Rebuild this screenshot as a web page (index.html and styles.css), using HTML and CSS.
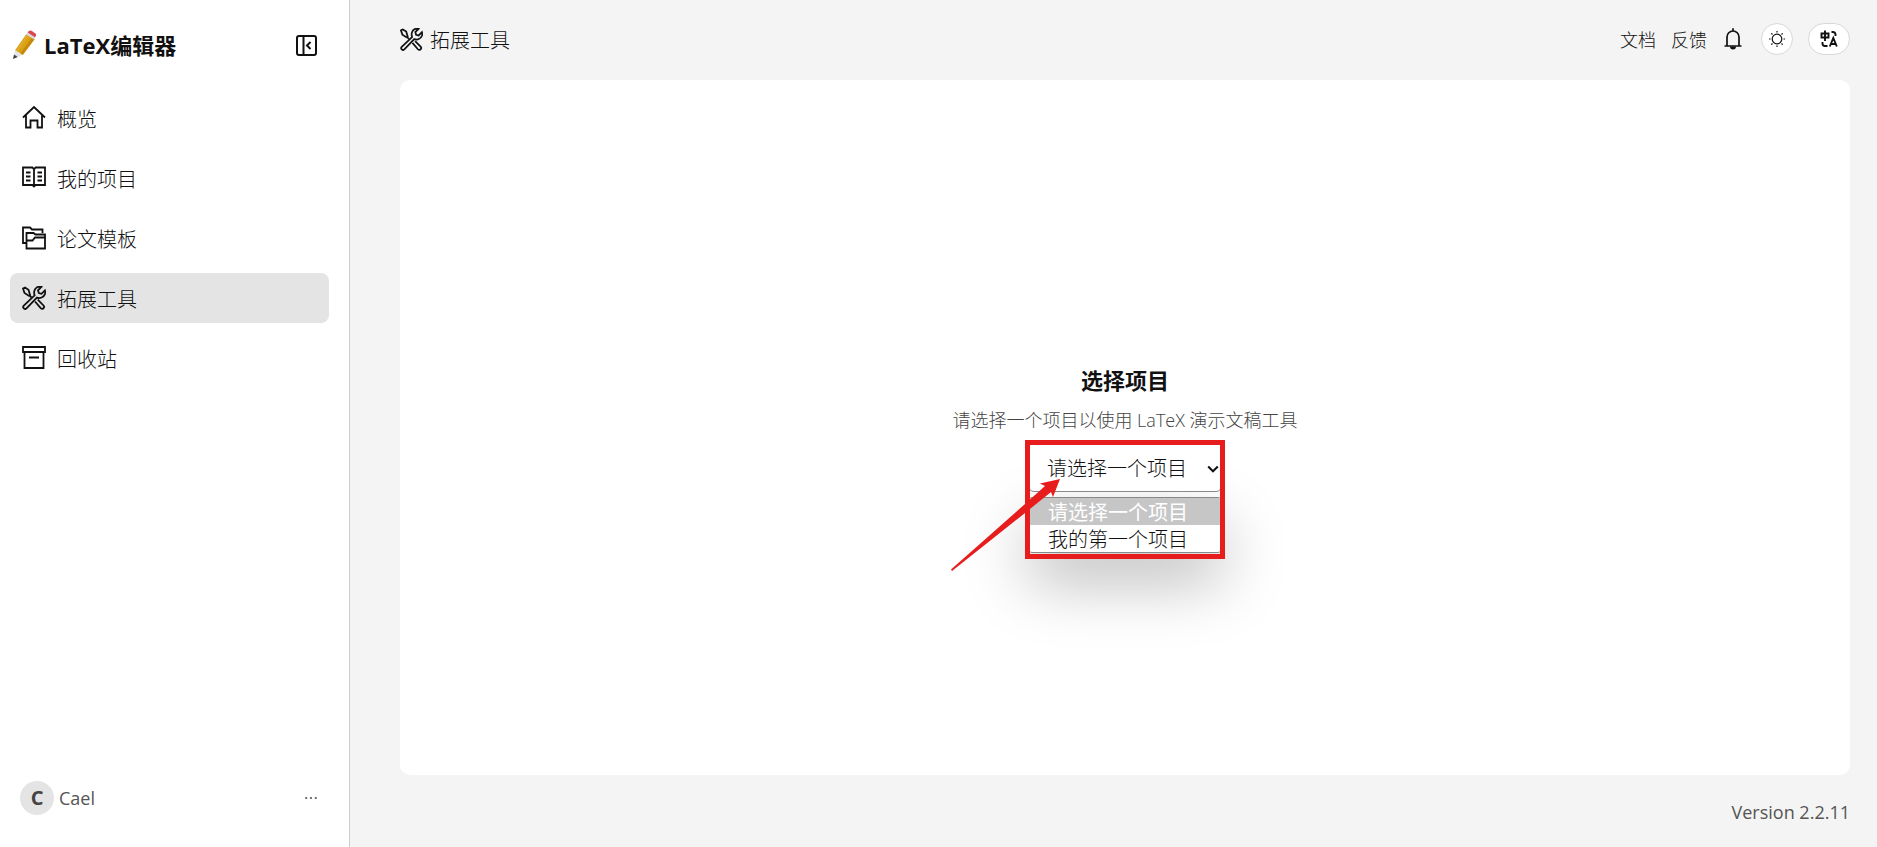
FILE: index.html
```html
<!DOCTYPE html>
<html lang="zh-CN">
<head>
<meta charset="utf-8">
<meta name="viewport" content="width=device-width, initial-scale=1">
<title>LaTeX编辑器</title>
<link rel="stylesheet" href="styles.css">
</head>
<body>
<svg class="defs" aria-hidden="true">
  <symbol id="tools" viewBox="0 0 24 24">
    <path d="M12.600 9.400 1.800 19.600a1.900 1.900 0 0 0 2.700 2.700L14.900 11.600c3.200 1.200 6.800-.2 8-3.500.4-1.200.4-2.500 0-3.700l-3.400 3.400-2.700-.8-.8-2.700L19.400.9C16.300-.1 13.200 1.700 12.400 4.800c-.4 1.600-.3 3.200.2 4.600Z"/>
    <path d="M1 2.500 3 1.500l3.500 2.300 1.500 5-1.300.9-4.200-2.700ZM7.500 9.500l2 2M13 15.500l5.700 6.700a1.900 1.900 0 0 0 2.800-2.700l-5.700-5.800"/>
  </symbol>
</svg>
<div class="app">
  <aside class="sidebar">
    <header class="brand">
      <svg class="pencil" viewBox="0 0 24 30" aria-hidden="true">
        <path fill="#d9a20f" d="m14.500 4 8 5.200L10.700 25 3.200 20.200Z"/>
        <path fill="#e0a92a" d="m14.500 4 2.600 1.700L5.700 21.800l-2.500-1.600Z"/>
        <path fill="#c8870d" d="m19.900 7.500 2.600 1.700L10.700 25l-2.500-1.600Z"/>
        <path fill="#d6d9dc" d="m15.200 2.800 8 5.200-1 1.600-8-5.200Z"/>
        <path fill="#d84b52" d="m15.500 2.600 1.300-1.500Q18-.1 19.500.8l3.700 2.500q1.300 1 .7 2.500l-.9 1.700Z"/>
        <path fill="#e3e5e6" d="m3.200 20.200 7.500 4.800-9.600 4Z"/>
        <path fill="#3b4248" d="m2 24.400 3.700 2.500L1 29Z"/>
      </svg>
      <h1 class="brand-name">LaTeX编辑器</h1>
      <button class="icon-button" type="button" aria-label="收起侧栏">
        <svg class="icon-collapse" viewBox="0 0 21 21"><rect x="1" y="1" width="19" height="19" rx="2"/><path d="M7.500 1v19M14.500 7l-3.500 3.500 3.500 3.500"/></svg>
      </button>
    </header>
    <nav class="nav">
      <a class="nav-item" href="#overview"><svg class="icon" viewBox="0 0 24 24"><path d="M1 11.500 12 1l11 10.500M4 9.500v12h4.500V14.500h7v7H20v-12"/></svg>概览</a>
      <a class="nav-item" href="#projects"><svg class="icon" viewBox="0 0 24 24"><path d="M12 3.500 10.500 1.500H1v17.500h9.500L12 20.500l1.500-1.500H23V1.500h-9.500ZM12 3.500v17M4 6.500h4.500M4 10.500h4.500M4 14.500h4.500M15.500 6.500H20M15.500 10.500H20M15.500 14.500H20"/></svg>我的项目</a>
      <a class="nav-item" href="#templates"><svg class="icon" viewBox="0 0 24 24"><path d="M4.500 17H1V1.500h7l2 2h10.500V7M4.500 22.500V7h7l2 1.500H23v14ZM4.500 14.500h6l2.500-3h10"/></svg>论文模板</a>
      <a class="nav-item active" href="#tools-page" aria-current="page"><svg class="icon"><use href="#tools"/></svg>拓展工具</a>
      <a class="nav-item" href="#trash"><svg class="icon" viewBox="0 0 24 24"><path d="M1 1h22v5H1ZM2.500 6h19v16h-19ZM7 11.500h10"/></svg>回收站</a>
    </nav>
    <footer class="user">
      <span class="avatar">C</span>
      <span class="user-name">Cael</span>
      <button class="icon-button" type="button" aria-label="更多">
        <svg class="icon-dots" viewBox="0 0 12 4"><circle cx="1.200" cy="2" r="1.100"/><circle cx="6" cy="2" r="1.100"/><circle cx="10.800" cy="2" r="1.100"/></svg>
      </button>
    </footer>
  </aside>
  <main class="main">
    <header class="topbar">
      <h2 class="page-title"><svg class="icon icon-title"><use href="#tools"/></svg>拓展工具</h2>
      <a class="top-link" href="#docs">文档</a>
      <a class="top-link" href="#feedback">反馈</a>
      <button class="icon-button bell" type="button" aria-label="通知">
        <svg class="icon-bell" viewBox="0 0 18 22"><path d="M3 18V9a6 6 0 0 1 12 0v9M.5 18h17M9 .3V3"/><path class="solid" d="M6 18.500h6a3 3 0 0 1-6 0Z"/></svg>
      </button>
      <button class="round-button" type="button" aria-label="主题">
        <svg class="icon-sun" viewBox="0 0 18 18"><circle cx="9" cy="9" r="4.800"/><path d="M9 1v1.500M9 15.500V17M1 9h1.500M15.500 9H17M3.300 3.300l1.200 1.200M13.500 13.500l1.200 1.200M3.300 14.700l1.200-1.200M13.500 4.500l1.200-1.200"/></svg>
      </button>
      <button class="round-button wide" type="button" aria-label="语言">
        <svg class="icon-lang" viewBox="0 0 18 18"><path d="M1.500 3.500h7v4h-7ZM5 .5v10.500M11.500 2H13a2.500 2.500 0 0 1 2.500 2.500V6M2.500 12v1.500A2.500 2.500 0 0 0 5 16h2.500M9.800 16.500 13.300 8l3.500 8.500M11 14h4.500"/></svg>
      </button>
    </header>
    <section class="card">
      <h3 class="card-title">选择项目</h3>
      <label class="card-text" for="project">请选择一个项目以使用 LaTeX 演示文稿工具</label>
      <div class="picker">
        <ul class="options" role="listbox" aria-label="项目">
          <li class="option selected" role="option" aria-selected="true">请选择一个项目</li>
          <li class="option" role="option" aria-selected="false">我的第一个项目</li>
        </ul>
        <select class="select" id="project">
          <option>请选择一个项目</option>
          <option>我的第一个项目</option>
        </select>
        <svg class="chevron" viewBox="0 0 12 8" aria-hidden="true"><path d="m1.200 1.500 4.800 4.800 4.800-4.800"/></svg>
        <div class="highlight"></div>
        <svg class="arrow" viewBox="0 0 110 92" aria-hidden="true"><path d="M109 0 89 4.500 94 7 74 25 0 90.500 1 92 74 34 100 13 102 18Z"/></svg>
      </div>
    </section>
    <footer class="version">Version 2.2.11</footer>
  </main>
</div>
</body>
</html>
```
FILE: styles.css
```css
* { box-sizing: border-box; }

body {
  margin: 0;
  background: #f4f4f4;
  color: #111;
  font-family: "Open Sans", "Noto Sans CJK SC", sans-serif;
  font-size: 20px;
  font-weight: 300;
}

h1, h2, h3, ul { margin: 0; padding: 0; }
a { color: inherit; text-decoration: none; }
button { padding: 0; border: 0; background: none; color: inherit; font: inherit; }
svg { display: block; fill: none; stroke: currentColor; flex: none; }

.defs { position: absolute; width: 0; height: 0; }

.app { display: flex; min-height: 100vh; }

.sidebar {
  display: flex;
  flex-direction: column;
  flex: 0 0 350px;
  padding: 0 20px 28px 10px;
  border-right: 1px solid #ccc;
  background: #fff;
}

.brand { display: flex; align-items: center; height: 90px; padding: 0 12px 0 2px; }
.pencil { width: 24px; height: 30px; margin-right: 8px; stroke: none; }
.brand-name { flex: 1; font-size: 22px; line-height: 30px; font-weight: 700; }
.icon-button { display: flex; align-items: center; justify-content: center; }
.icon-collapse { width: 21px; height: 21px; stroke-width: 2; }

.nav { display: flex; flex-direction: column; gap: 10px; padding-top: 3px; }
.nav-item {
  display: flex;
  align-items: center;
  gap: 11px;
  height: 50px;
  padding: 0 12px;
  border-radius: 8px;
}
.nav-item.active { background: #e4e4e4; }
.icon { width: 24px; height: 24px; stroke-width: 1.8; }

.user { display: flex; align-items: center; gap: 5px; margin-top: auto; padding: 4px 12px 4px 10px; color: #555; }
.avatar {
  width: 34px;
  height: 34px;
  border-radius: 50%;
  background: #e4e4e4;
  color: #444;
  font-weight: 700;
  line-height: 34px;
  text-align: center;
}
.user-name { flex: 1; font-size: 18px; font-weight: 400; line-height: 26px; }
.icon-dots { width: 12px; height: 4px; fill: currentColor; stroke: none; }

.main { display: flex; flex: 1; flex-direction: column; padding: 0 27px 0 50px; }
.topbar { display: flex; align-items: center; height: 80px; padding-bottom: 2px; }
.page-title { display: flex; flex: 1; align-items: center; gap: 7px; font-size: 20px; font-weight: 300; }
.icon-title { width: 23px; height: 23px; }
.top-link { margin-right: 15px; font-size: 18px; }
.bell { margin: 0 19px 0 2px; }
.icon-bell { width: 18px; height: 22px; stroke-width: 1.7; }
.solid { fill: currentColor; stroke: none; }
.round-button {
  display: flex;
  align-items: center;
  justify-content: center;
  width: 32px;
  height: 32px;
  border: 1px solid #d8d8d8;
  border-radius: 16px;
  background: #fff;
}
.round-button.wide { width: 42px; margin-left: 15px; }
.icon-sun { width: 18px; height: 18px; stroke-width: 1.2; }
.icon-lang { width: 18px; height: 18px; stroke-width: 1.9; }

.card {
  display: flex;
  flex: 1;
  flex-direction: column;
  align-items: center;
  justify-content: center;
  border-radius: 10px;
  background: #fff;
}
.card-title { font-size: 22px; font-weight: 700; line-height: 32px; }
.card-text { margin: 10px 0 8px; color: #444; font-size: 18px; line-height: 28px; }

.picker { position: relative; width: 194px; }
.select {
  position: relative;
  display: block;
  width: 100%;
  height: 50px;
  padding: 4px 18px 0;
  border: 1px solid #888;
  border-radius: 6px;
  appearance: none;
  background: #fff;
  color: inherit;
  font: inherit;
}
.chevron { position: absolute; top: 23px; right: 3px; width: 12px; height: 8px; stroke-width: 2; }
.options {
  position: absolute;
  top: 55px;
  left: 0;
  width: 100%;
  overflow: hidden;
  border: 1px solid #888;
  border-radius: 4px;
  background: #fff;
  box-shadow: 0 28px 64px 0 rgba(0, 0, 0, 0.28);
  list-style: none;
}
.option { height: 27px; padding: 0 19px; line-height: 30px; }
.option.selected { background: #c6c6c6; color: #fff; font-weight: 400; }
.highlight { position: absolute; top: -2px; left: -3px; width: 200px; height: 119px; border: 5px solid #e71d1d; }
.arrow { position: absolute; top: 37px; left: -77px; width: 110px; height: 92px; fill: #e71d1d; stroke: none; }

.version { height: 72px; color: #555; font-size: 18px; font-weight: 400; line-height: 74px; text-align: right; }
```
